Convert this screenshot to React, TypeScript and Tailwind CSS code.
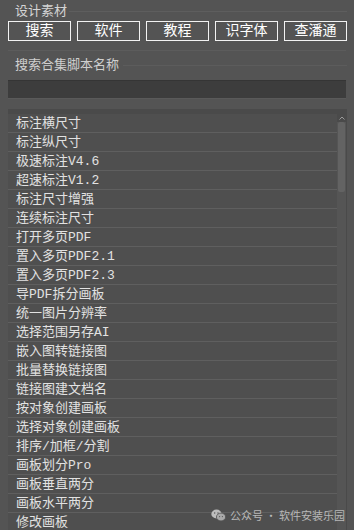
import React from "react";

const tabs = ["搜索", "软件", "教程", "识字体", "查潘通"];

const items = [
  "标注横尺寸",
  "标注纵尺寸",
  "极速标注V4.6",
  "超速标注V1.2",
  "标注尺寸增强",
  "连续标注尺寸",
  "打开多页PDF",
  "置入多页PDF2.1",
  "置入多页PDF2.3",
  "导PDF拆分画板",
  "统一图片分辨率",
  "选择范围另存AI",
  "嵌入图转链接图",
  "批量替换链接图",
  "链接图建文档名",
  "按对象创建画板",
  "选择对象创建画板",
  "排序/加框/分割",
  "画板划分Pro",
  "画板垂直两分",
  "画板水平两分",
  "修改画板",
];

const font = { fontFamily: '"Liberation Mono", "Noto Sans CJK SC", monospace' };

export default function App() {
  return (
    <div
      className="relative w-[354px] h-[530px] overflow-hidden bg-[#545454] text-[#dcdcdc]"
      style={font}
    >
      {/* group title */}
      <div className="flex items-center h-[19px] pl-[15px] pr-[7px] pt-[3px]">
        <span className="text-[13px] leading-none text-[#d4d4d4]">设计素材</span>
        <div className="flex-1 ml-[2px] h-px bg-[#5e5e5e]" />
      </div>

      {/* tab buttons */}
      <div className="flex gap-[6px] pl-[8px] pr-[7px] mt-[2px]">
        {tabs.map((t) => (
          <div
            key={t}
            className="flex-1 h-[20px] border border-[#f2f2f2] flex items-center justify-center text-[14px] leading-none text-white"
          >
            {t}
          </div>
        ))}
      </div>

      <div className="mx-[8px] mt-[9px] h-px bg-[#5c5c5c]" />

      {/* search label */}
      <div className="flex items-center h-[14px] pl-[15px] pr-[7px] mt-[7px]">
        <span className="text-[13px] leading-none text-[#cfcfcf]">搜索合集脚本名称</span>
        <div className="flex-1 ml-[4px] h-px bg-[#5c5c5c]" />
      </div>

      {/* input */}
      <div className="mx-[8px] mt-[8px] h-[19px] bg-[#3d3d3d] border-t border-[#353535] border-b border-b-[#5a5a5a]" />

      {/* list */}
      <div className="flex ml-[8px] mr-[7px] mt-[10px] h-[430px] border-t-[5px] border-[#4a4a4a] bg-[#4e4e4e]">
        <div className="flex-1 flex flex-col">
          {items.map((it) => (
            <div
              key={it}
              className="h-[19px] shrink-0 flex items-center pl-[8px] border-b border-[#5f5f5f] bg-[#4f4f4f] text-[13px] leading-none text-[#e2e2e2]"
            >
              {it}
            </div>
          ))}
        </div>
        <div className="w-[10px] flex flex-col bg-[#555555] border-r border-[#4a4a4a]">
          <div className="h-[8px] flex items-center justify-center bg-[#4a4a4a]">
            <svg width="6" height="4" viewBox="0 0 6 4">
              <path d="M0.5 3.5 L3 1 L5.5 3.5" fill="none" stroke="#9a9a9a" strokeWidth="1" />
            </svg>
          </div>
          <div className="mx-[1px] h-[70px] bg-[#636363] rounded-[2px]" />
        </div>
      </div>

      {/* watermark */}
      <div className="absolute left-[211px] top-[509px] flex items-center gap-[4px] text-[11px] leading-none text-[#b8b8b8]" style={{ fontFamily: '"Noto Sans CJK SC", sans-serif' }}>
        <svg width="15" height="13" viewBox="0 0 15 13">
          <ellipse cx="5.5" cy="5" rx="5.2" ry="4.4" fill="#bdbdbd" />
          <ellipse cx="10" cy="8" rx="4.6" ry="3.9" fill="#a9a9a9" stroke="#545454" strokeWidth="0.8" />
          <circle cx="3.7" cy="4" r="0.7" fill="#545454" />
          <circle cx="7" cy="4" r="0.7" fill="#545454" />
          <circle cx="8.6" cy="7.6" r="0.6" fill="#545454" />
          <circle cx="11.4" cy="7.6" r="0.6" fill="#545454" />
        </svg>
        <span>公众号 · 软件安装乐园</span>
      </div>
    </div>
  );
}
